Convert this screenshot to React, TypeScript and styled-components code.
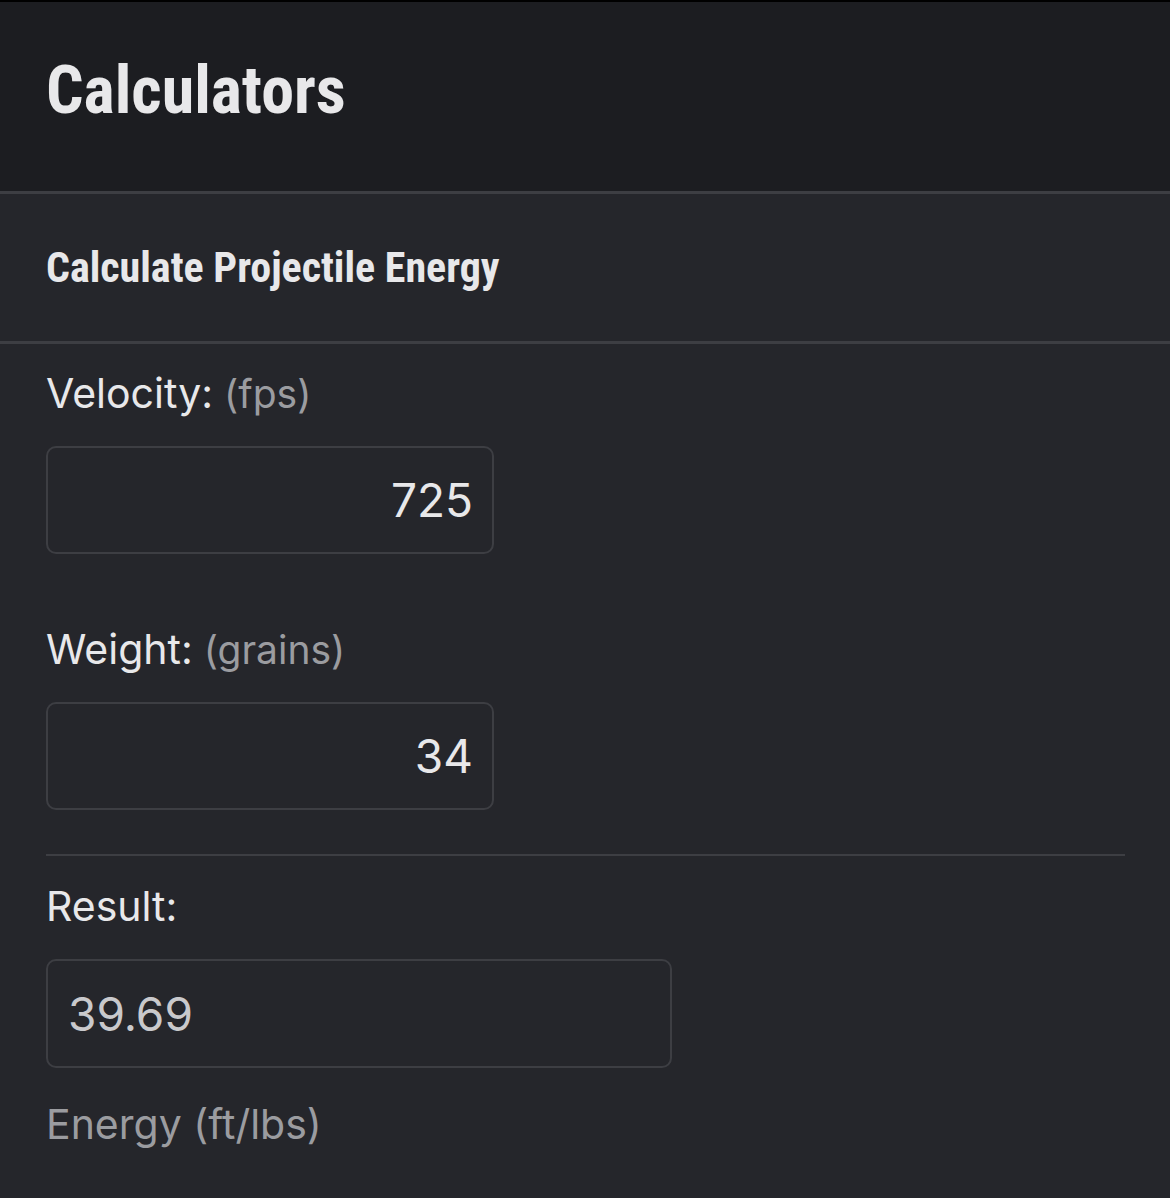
import styled, { createGlobalStyle } from "styled-components"

const GlobalStyle = createGlobalStyle`
    html, body {
        margin: 0;
        padding: 0;
        background: #25262b;
    }
    * {
        box-sizing: border-box;
    }
`

const Colors = {
    Black: "#000000",
    Header: "#1c1d21",
    Panel: "#25262b",
    Line: "#3d3e43",
    Text: "#e8e8ea",
    Muted: "#9b9ca0",
    Value: "#c9c9cc",
}

interface FieldProps {
    label: string
    unit?: string
    value: string
}

function Field({ label, unit, value }: FieldProps) {
    return (
        <FieldGroup>
            <Label>
                {label}
                {unit && <Unit> {unit}</Unit>}
            </Label>
            <NumberBox readOnly value={value} />
        </FieldGroup>
    )
}

function App() {
    return (
        <>
            <GlobalStyle />
            <Page>
                <Header>
                    <Title>Calculators</Title>
                </Header>
                <SectionBar>
                    <SectionTitle>Calculate Projectile Energy</SectionTitle>
                </SectionBar>
                <Body>
                    <Field label="Velocity:" unit="(fps)" value="725" />
                    <Field label="Weight:" unit="(grains)" value="34" />
                    <Divider />
                    <ResultGroup>
                        <Label>Result:</Label>
                        <ResultBox readOnly value="39.69" />
                        <Hint>Energy (ft/lbs)</Hint>
                    </ResultGroup>
                </Body>
            </Page>
        </>
    )
}

export default App

const Page = styled.div`
    min-height: 1198px;
    background: ${Colors.Panel};
    border-top: 2px solid ${Colors.Black};
`

const Header = styled.header`
    height: 192px;
    padding: 0 46px;
    display: flex;
    align-items: center;
    background: ${Colors.Header};
    border-bottom: 3px solid ${Colors.Line};
`

const Title = styled.h1`
    margin: 0 0 12px;
    font-family: "Roboto Condensed", "Liberation Sans Narrow", "DejaVu Sans Condensed", Roboto, sans-serif;
    font-stretch: condensed;
    font-size: 66px;
    font-weight: 700;
    color: ${Colors.Text};
`

const SectionBar = styled.div`
    height: 150px;
    padding: 0 46px;
    display: flex;
    align-items: center;
    border-bottom: 3px solid ${Colors.Line};
`

const SectionTitle = styled.h3`
    margin: 0;
    font-family: "Roboto Condensed", "Liberation Sans Narrow", "DejaVu Sans Condensed", Roboto, sans-serif;
    font-stretch: condensed;
    font-size: 42px;
    font-weight: 700;
    color: ${Colors.Text};
`

const Body = styled.div`
    padding: 24px 45px 0 46px;
    display: flex;
    flex-direction: column;
    font-family: Inter, "Noto Sans", sans-serif;
`

const FieldGroup = styled.div`
    display: flex;
    flex-direction: column;
    gap: 28px;
    margin-bottom: 70px;

    &:nth-of-type(2) {
        margin-bottom: 44px;
    }
`

const Label = styled.div`
    height: 50px;
    line-height: 50px;
    font-size: 41px;
    font-weight: 400;
    color: ${Colors.Text};
`

const Unit = styled.span`
    font-size: 39px;
    color: ${Colors.Muted};
`

const NumberBox = styled.input`
    width: 448px;
    height: 108px;
    padding: 0 19px 0 20px;
    text-align: right;
    font-family: Inter, "Noto Sans", sans-serif;
    font-size: 46px;
    color: ${Colors.Text};
    background: ${Colors.Panel};
    border: 2px solid ${Colors.Line};
    border-radius: 10px;
    outline: none;
`

const Divider = styled.hr`
    margin: 0;
    height: 2px;
    border: none;
    background: ${Colors.Line};
`

const ResultGroup = styled.div`
    display: flex;
    flex-direction: column;
    padding-top: 25px;
    gap: 28px;
`

const ResultBox = styled(NumberBox)`
    width: 626px;
    height: 109px;
    text-align: left;
    color: ${Colors.Value};
`

const Hint = styled.div`
    margin-top: 3px;
    height: 50px;
    line-height: 50px;
    font-size: 41px;
    color: ${Colors.Muted};
`
